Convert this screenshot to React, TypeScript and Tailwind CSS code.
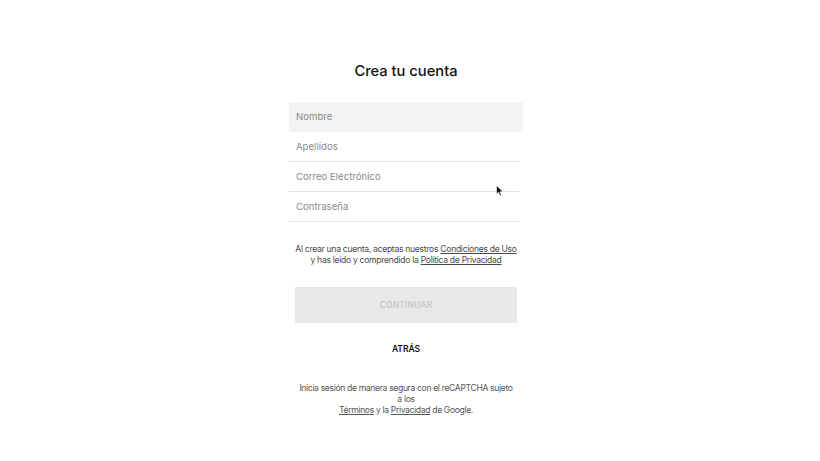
import React from "react";

export default function App() {
  return (
    <div className="relative w-[820px] h-[461px] bg-white overflow-hidden" style={{ fontFamily: "Inter, 'Noto Sans', sans-serif" }}>
      <div className="flex justify-center pr-2">
        <div className="w-[234px] flex flex-col">
          <h1 className="mt-[61px] text-center text-[14.7px] leading-[20px] font-medium text-[#111]">Crea tu cuenta</h1>
          <div className="mt-[21px] flex flex-col">
            <div className="h-[30px] bg-[#f3f3f3] rounded-[2px] flex items-center px-[7px] text-[9.6px] text-[#8a8a8a]">Nombre</div>
            <div className="mr-[4px] h-[30px] border-b border-[#e3e3e3] flex items-center px-[7px] pt-[2px] text-[9.6px] text-[#8a8a8a]">Apellidos</div>
            <div className="mr-[4px] h-[30px] border-b border-[#e3e3e3] flex items-center px-[7px] pt-[2px] text-[9.6px] text-[#8a8a8a]">Correo Electrónico</div>
            <div className="mr-[4px] h-[30px] border-b border-[#e3e3e3] flex items-center px-[7px] pt-[2px] text-[9.6px] text-[#8a8a8a]">Contraseña</div>
          </div>
          <p className="mt-[22px] text-center text-[8.6px] leading-[11px] tracking-[-0.3px] text-[#4a4a4a] whitespace-nowrap">
            Al crear una cuenta, aceptas nuestros <span className="underline">Condiciones de Uso</span>
            <br />y has leído y comprendido la <span className="underline">Política de Privacidad</span>
          </p>
          <div className="mt-[21px] mx-[6px] h-[36px] bg-[#e8e8e8] flex items-center justify-center text-[8.5px] tracking-[0.2px] text-[#c4c4c4] font-medium">CONTINUAR</div>
          <div className="mt-[20px] text-center text-[8.5px] font-semibold text-[#111]">ATRÁS</div>
          <p className="mt-[27px] text-center text-[8.6px] leading-[11px] tracking-[-0.35px] text-[#555] whitespace-nowrap">
            Inicia sesión de manera segura con el reCAPTCHA sujeto
            <br />a los
            <br />
            <span className="underline">Términos</span> y la <span className="underline">Privacidad</span> de Google.
          </p>
        </div>
      </div>
      <svg className="absolute left-[496px] top-[185px]" width="8" height="12" viewBox="0 0 8 12">
        <path d="M0.5 0.5 L0.5 9 L2.6 7.2 L4 10.8 L5.4 10.2 L4 6.8 L7 6.8 Z" fill="#111" stroke="#fff" strokeWidth="0.6" />
      </svg>
    </div>
  );
}
